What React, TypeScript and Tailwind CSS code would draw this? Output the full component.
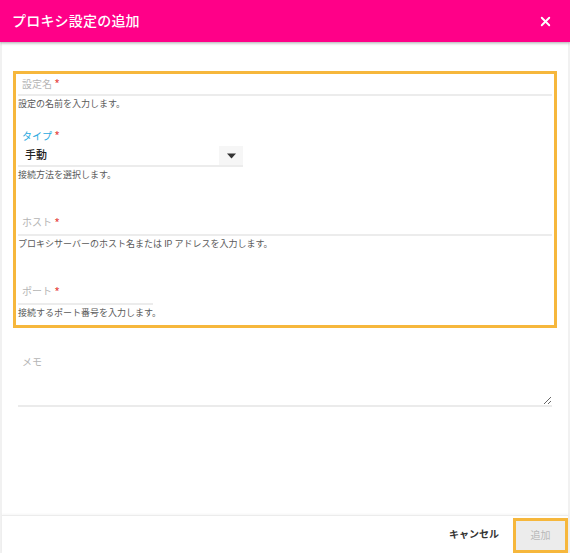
import { X } from "lucide-react";

function Req() {
  return <span className="ml-[3px] text-[#e53935] text-[9px] font-bold">*</span>;
}

function Helper({ children }: { children: React.ReactNode }) {
  return <p className="h-[17px] flex items-center text-[9px] text-[#5a5a5a] leading-none">{children}</p>;
}

export default function App() {
  return (
    <div className="w-[570px] h-[553px] flex flex-col bg-white font-['Roboto','Noto_Sans_CJK_JP',sans-serif]">
      {/* Title bar */}
      <header className="relative z-10 h-[42px] shrink-0 bg-[#ff0088] flex items-center justify-between pl-3 pr-[17px] shadow-[0_1px_3px_rgba(0,0,0,0.35)]">
        <h1 className="text-white text-[14px] font-medium tracking-[0.2px]">プロキシ設定の追加</h1>
        <X className="w-[15px] h-[15px] text-white" strokeWidth={3} />
      </header>

      <div className="flex-1 flex flex-col border-x-2 border-[#f1f1f1]">
        <main className="flex-1 pt-[29px] px-[11px]">
          {/* Required fields */}
          <section className="border-[3px] border-[#f6b73c] px-[2px] pb-[3px]">
            <div className="h-[22px] pl-1 flex items-center border-b-2 border-[#ececec] text-[10px] text-[#b5b5b5]">
              設定名<Req />
            </div>
            <Helper>設定の名前を入力します。</Helper>

            <div className="mt-[17px] w-[225px]">
              <div className="h-[12px] pl-1 flex items-center text-[10px] text-[#29a9e0]">
                タイプ<Req />
              </div>
              <div className="mt-[3px] h-[22px] flex items-stretch border-b-2 border-[#ececec]">
                <span className="flex-1 pl-[7px] pt-[3px] flex items-center text-[11px] font-medium text-[#222]">手動</span>
                <span className="mt-[1px] w-[24px] bg-[#f6f6f6] flex items-center justify-center">
                  <svg width="9" height="6" viewBox="0 0 9 6">
                    <path d="M0 0.5h9L4.5 5.5z" fill="#333" />
                  </svg>
                </span>
              </div>
            </div>
            <Helper>接続方法を選択します。</Helper>

            <div className="mt-[27px] h-[25px] pl-1 flex items-center border-b-2 border-[#ececec] text-[10px] text-[#b5b5b5]">
              ホスト<Req />
            </div>
            <Helper>プロキシサーバーのホスト名または IP アドレスを入力します。</Helper>

            <div className="mt-[27px] w-[135px] h-[25px] pl-1 flex items-center border-b-2 border-[#ececec] text-[10px] text-[#b5b5b5]">
              ポート<Req />
            </div>
            <Helper>接続するポート番号を入力します。</Helper>
          </section>

          {/* Memo */}
          <div className="mt-[20px] mx-[5px]">
            <div className="h-[28px] pl-1 flex items-center text-[10px] text-[#b5b5b5]">メモ</div>
            <textarea className="block w-full h-[31px] resize-y border-0 border-b-2 border-[#ebebeb] outline-none" />
          </div>
        </main>

        {/* Actions */}
        <footer className="h-[38px] shrink-0 border-t border-[#ececec] shadow-[0_-1px_2px_rgba(0,0,0,0.04)] flex items-center justify-end gap-[14px]">
          <button className="text-[10px] font-bold text-[#333]">キャンセル</button>
          <button className="w-[55px] h-[35px] mt-[2px] border-[3px] border-[#f6b73c] bg-[#ececec] text-[10px] text-[#b8b8b8]">
            追加
          </button>
        </footer>
      </div>
    </div>
  );
}
